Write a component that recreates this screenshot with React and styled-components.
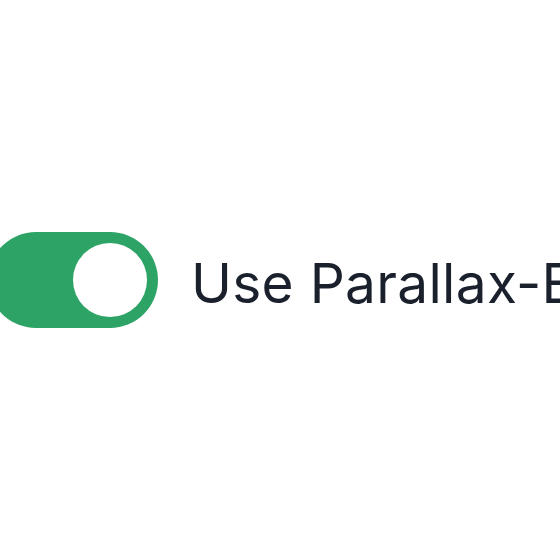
import React, { useState } from "react";
import styled, { createGlobalStyle } from "styled-components";

const GlobalStyle = createGlobalStyle`
  html, body {
    margin: 0;
    padding: 0;
    background: #ffffff;
    overflow: hidden;
  }
  body {
    font-family: Inter, "Noto Sans", sans-serif;
  }
`;

const Page = styled.div`
  width: 560px;
  height: 560px;
  display: flex;
  align-items: center;
  overflow: hidden;
`;

const Row = styled.label`
  display: flex;
  align-items: center;
  gap: 33px;
  margin-left: -12px;
  cursor: pointer;
  white-space: nowrap;
`;

const Track = styled.span`
  flex: none;
  display: flex;
  align-items: center;
  justify-content: ${(p) => (p.$on ? "flex-end" : "flex-start")};
  width: 170px;
  height: 96px;
  padding: 11px;
  box-sizing: border-box;
  border-radius: 48px;
  background: ${(p) => (p.$on ? "#2ea366" : "#cbd5e0")};
`;

const Thumb = styled.span`
  width: 74px;
  height: 74px;
  border-radius: 50%;
  background: #ffffff;
`;

const Label = styled.span`
  font-size: 55px;
  font-weight: 400;
  color: #1a202c;
  letter-spacing: 0.3px;
  padding-top: 6px;
`;

export default function App() {
  const [on, setOn] = useState(true);
  return (
    <>
      <GlobalStyle />
      <Page>
        <Row onClick={() => setOn(!on)}>
          <Track $on={on}>
            <Thumb />
          </Track>
          <Label>Use Parallax-Effect</Label>
        </Row>
      </Page>
    </>
  );
}
